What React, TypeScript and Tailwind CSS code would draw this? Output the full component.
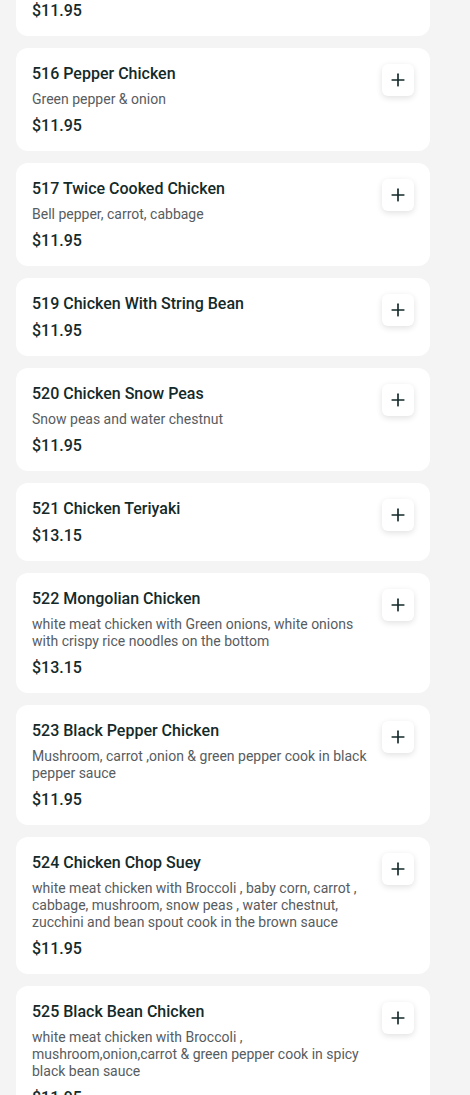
import { Plus } from 'lucide-react'

type Item = {
  name: string
  desc?: string
  price: string
}

const items: Item[] = [
  { name: '515 Chicken With Broccoli', desc: 'Broccoli & carrot', price: '$11.95' },
  { name: '516 Pepper Chicken', desc: 'Green pepper & onion', price: '$11.95' },
  { name: '517 Twice Cooked Chicken', desc: 'Bell pepper, carrot, cabbage', price: '$11.95' },
  { name: '519 Chicken With String Bean', price: '$11.95' },
  { name: '520 Chicken Snow Peas', desc: 'Snow peas and water chestnut', price: '$11.95' },
  { name: '521 Chicken Teriyaki', price: '$13.15' },
  {
    name: '522 Mongolian Chicken',
    desc: 'white meat chicken with Green onions, white onions with crispy rice noodles on the bottom',
    price: '$13.15',
  },
  {
    name: '523 Black Pepper Chicken',
    desc: 'Mushroom, carrot ,onion & green pepper cook in black pepper sauce',
    price: '$11.95',
  },
  {
    name: '524 Chicken Chop Suey',
    desc: 'white meat chicken with Broccoli , baby corn, carrot , cabbage, mushroom, snow peas , water chestnut, zucchini and bean spout cook in the brown sauce',
    price: '$11.95',
  },
  {
    name: '525 Black Bean Chicken',
    desc: 'white meat chicken with Broccoli , mushroom,onion,carrot & green pepper cook in spicy black bean sauce',
    price: '$11.95',
  },
]

function MenuCard({ item }: { item: Item }) {
  return (
    <div className="flex items-start justify-between gap-2 rounded-xl bg-white px-4 pt-[17px] pb-[15px]">
      <div className="flex flex-col">
        <h3 className="text-[16px] leading-[18px] font-medium text-[#142a2a]">{item.name}</h3>
        {item.desc && (
          <p className="mt-2 text-[14px] leading-[17px] text-[#575c5f]">{item.desc}</p>
        )}
        <p className="mt-2 text-[16px] leading-[20px] font-medium text-[#142a2a]">{item.price}</p>
      </div>
      <button className="-mt-px flex h-8 w-8 shrink-0 items-center justify-center rounded-md bg-white shadow-[0_2px_6px_rgba(0,0,0,0.12)]">
        <Plus size={20} strokeWidth={2} className="text-[#142a2a]" />
      </button>
    </div>
  )
}

export default function App() {
  return (
    <div className="min-h-[1095px] overflow-hidden bg-[#f4f4f4] font-['Roboto',sans-serif]">
      <div className="-mt-[67px] flex w-[430px] flex-col gap-3 pl-4">
        {items.map(item => (
          <MenuCard key={item.name} item={item} />
        ))}
      </div>
    </div>
  )
}
